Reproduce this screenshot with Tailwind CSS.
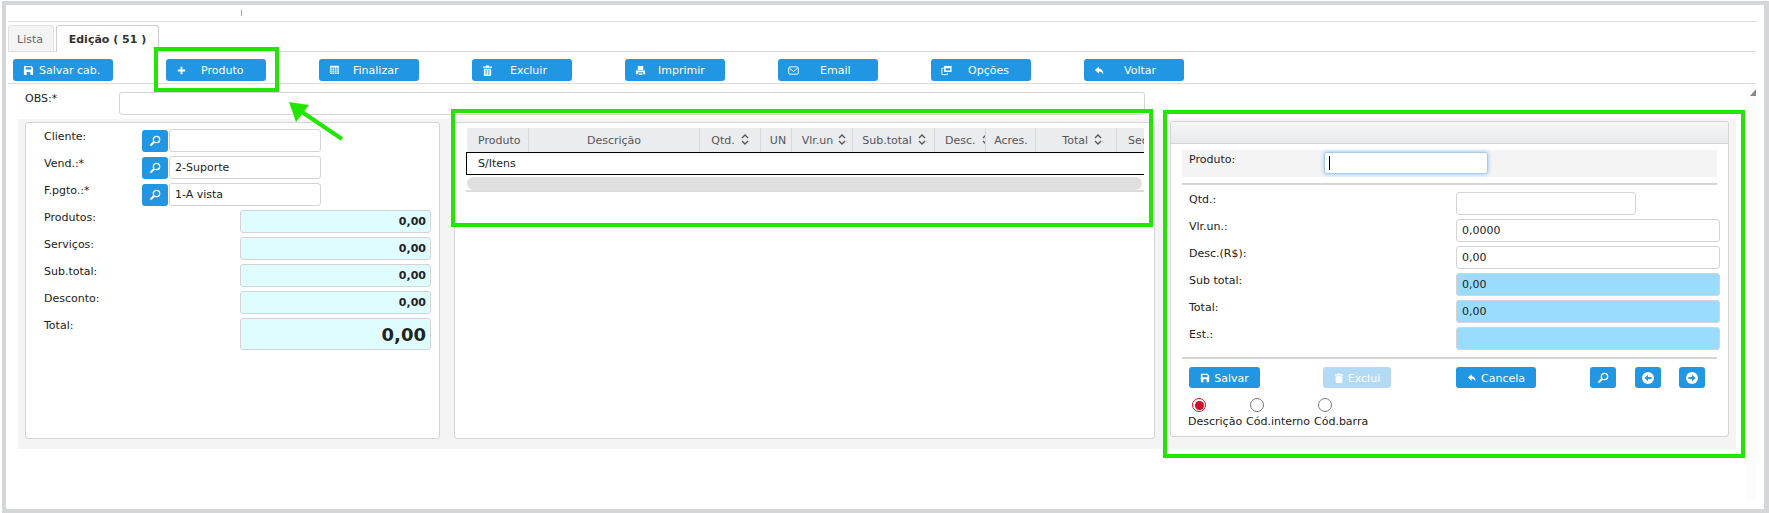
<!DOCTYPE html>
<html lang="pt-BR">
<head>
  <meta charset="UTF-8">
  <title>Edição</title>
  <script src="https://cdn.jsdelivr.net/npm/@tailwindcss/browser@4"></script>
</head>
<body class="bg-white text-[#222] text-[11px] leading-[12px] font-['DejaVu_Sans',sans-serif]">
<div class="relative w-[1769px] h-[513px] overflow-hidden bg-white">
  <!-- moldura -->
  <div class="ml-[2px] mt-[1px] h-[512px] border-[#d4d6d8] border-l-[4px] border-t-[4px] border-r-[5px] border-b-[4px]">
    <div class="ml-[2px] w-[1748px]">
      <!-- topo -->
      <div class="h-[17px] border-b border-[#dcdcdc] pt-[5px] pl-[233px]">
        <div class="w-px h-[6px] bg-[#aaa]"></div>
      </div>
      <!-- abas -->
      <div class="h-[30px] pt-[3px] border-b border-[#dcdcdc] flex gap-[2px]">
        <div class="w-[46px] h-[26px] bg-[#f4f4f4] border border-b-0 border-[#e2e2e2] rounded-t-[3px] flex items-center justify-center pt-[2px] pr-[2px] text-[#666]">Lista</div>
        <div class="w-[103px] h-[27px] bg-white border border-b-0 border-[#cfcfcf] rounded-t-[3px] flex items-center justify-center pt-[2px] font-bold text-[#333]">Edição ( 51 )</div>
      </div>
      <!-- barra de botoes -->
      <div class="h-[32px] border-b border-[#dcdcdc] pt-[7px] pl-[5px] flex gap-[53px]">
        <button class="w-[100px] h-[22px] rounded-[3px] bg-[#2196e3] text-white flex items-center pl-[10px]">
          <svg class="w-[11px] h-[11px]" viewBox="0 0 12 12"><path fill="#fff" fill-rule="evenodd" d="M2 1h7l2 2v7a1 1 0 0 1-1 1H2a1 1 0 0 1-1-1V2a1 1 0 0 1 1-1zM3 2.5V5h6V2.5zM4 7.5V11h4V7.5z"/></svg>
          <span class="ml-[5px] mt-[2px]">Salvar cab.</span>
        </button>
        <button class="w-[100px] h-[22px] rounded-[3px] bg-[#2196e3] text-white flex items-center pl-[10px]">
          <svg class="w-[11px] h-[11px]" viewBox="0 0 12 12"><path fill="#fff" d="M5 2h2v3h3v2H7v3H5V7H2V5h3z"/></svg>
          <span class="ml-[14px] mt-[2px]">Produto</span>
        </button>
        <button class="w-[100px] h-[22px] rounded-[3px] bg-[#2196e3] text-white flex items-center pl-[10px]">
          <svg class="w-[11px] h-[11px] -mt-[2px]" viewBox="0 0 12 12"><rect x="1" y="2" width="10" height="9" rx="1" fill="#fff"/><path stroke="#2196e3" stroke-width=".7" d="M1 4.5h10M1 6.7h10M1 8.9h10M3.5 4v7M6 4v7M8.5 4v7"/></svg>
          <span class="ml-[13px] mt-[2px]">Finalizar</span>
        </button>
        <button class="w-[100px] h-[22px] rounded-[3px] bg-[#2196e3] text-white flex items-center pl-[10px]">
          <svg class="w-[11px] h-[11px]" viewBox="0 0 12 12"><path fill="#fff" d="M4.5 0.5h3l.5 1h3v1.5H1V1.500h3zM2 4h8v7a1 1 0 0 1-1 1H3a1 1 0 0 1-1-1z"/><path stroke="#2196e3" d="M4.500 5.500v5M7.500 5.500v5"/></svg>
          <span class="ml-[17px] mt-[2px]">Excluir</span>
        </button>
        <button class="w-[100px] h-[22px] rounded-[3px] bg-[#2196e3] text-white flex items-center pl-[10px]">
          <svg class="w-[11px] h-[11px]" viewBox="0 0 12 12"><path fill="#fff" d="M3 1h6v4.500H3zM1 6h10v4H9V8H3v2H1zM4 9h4v2H4z"/></svg>
          <span class="ml-[12px] mt-[2px]">Imprimir</span>
        </button>
        <button class="w-[100px] h-[22px] rounded-[3px] bg-[#2196e3] text-white flex items-center pl-[10px]">
          <svg class="w-[11px] h-[11px]" viewBox="0 0 12 12" fill="none" stroke="#fff"><rect x=".7" y="2" width="10.600" height="8" rx="1.500"/><path d="M1.500 3.500 6 7l4.500-3.500"/></svg>
          <span class="ml-[21px] mt-[2px]">Email</span>
        </button>
        <button class="w-[100px] h-[22px] rounded-[3px] bg-[#2196e3] text-white flex items-center pl-[10px]">
          <svg class="w-[11px] h-[11px]" viewBox="0 0 12 12" fill="none" stroke="#fff"><path d="M3 3.500H1v7h6V9"/><rect x="4" y="1.500" width="7" height="5.500" fill="#fff"/><rect x="5" y="3.500" width="5" height="2.500" fill="#2196e3" stroke="none"/></svg>
          <span class="ml-[16px] mt-[2px]">Opções</span>
        </button>
        <button class="w-[100px] h-[22px] rounded-[3px] bg-[#2196e3] text-white flex items-center pl-[10px]">
          <svg class="w-[11px] h-[11px]" viewBox="0 0 12 12"><path fill="#fff" d="M5.500 1.500 1 5.500l4.500 4V7c2.500 0 3.700 1 4.500 3.500C10.500 6.500 8.500 4 5.500 4z"/></svg>
          <span class="ml-[19px] mt-[2px]">Voltar</span>
        </button>
      </div>
      <!-- OBS -->
      <div class="mt-[8px] flex items-start">
        <label class="w-[111px] pl-[17px] pt-[1px]">OBS:*</label>
        <input class="w-[1026px] h-[23px] border border-[#d4d4d4] rounded-[3px] bg-white">
      </div>
      <!-- painel -->
      <div class="mt-[4px] ml-[10px] w-[1718px] h-[330px] bg-[#f4f4f4] flex items-start">
        <!-- coluna esquerda -->
        <div class="ml-[7px] mt-[3px] w-[415px] h-[317px] bg-white border border-[#d4d4d4] rounded-[3px] pt-[6px] pl-[18px]">
          <div class="h-[27px] flex items-start">
            <label class="w-[98px] pt-[2px]">Cliente:</label>
            <button class="mt-px w-[26px] h-[22px] rounded-[3px] bg-[#2196e3] flex items-center justify-center">
              <svg class="w-[12px] h-[12px]" viewBox="0 0 12 12" fill="none" stroke="#fff"><circle cx="7.500" cy="4.500" r="3.200" stroke-width="1.300"/><path d="M5 7 1.500 10.500" stroke-width="2"/></svg>
            </button>
            <input class="ml-px w-[152px] h-[23px] border border-[#d4d4d4] rounded-[3px] px-[5px]">
          </div>
          <div class="h-[27px] flex items-start">
            <label class="w-[98px] pt-[2px]">Vend.:*</label>
            <button class="mt-px w-[26px] h-[22px] rounded-[3px] bg-[#2196e3] flex items-center justify-center">
              <svg class="w-[12px] h-[12px]" viewBox="0 0 12 12" fill="none" stroke="#fff"><circle cx="7.500" cy="4.500" r="3.200" stroke-width="1.300"/><path d="M5 7 1.500 10.500" stroke-width="2"/></svg>
            </button>
            <input class="ml-px w-[152px] h-[23px] border border-[#d4d4d4] rounded-[3px] px-[5px]" value="2-Suporte">
          </div>
          <div class="h-[27px] flex items-start">
            <label class="w-[98px] pt-[2px]">F.pgto.:*</label>
            <button class="mt-px w-[26px] h-[22px] rounded-[3px] bg-[#2196e3] flex items-center justify-center">
              <svg class="w-[12px] h-[12px]" viewBox="0 0 12 12" fill="none" stroke="#fff"><circle cx="7.500" cy="4.500" r="3.200" stroke-width="1.300"/><path d="M5 7 1.500 10.500" stroke-width="2"/></svg>
            </button>
            <input class="ml-px w-[152px] h-[23px] border border-[#d4d4d4] rounded-[3px] px-[5px]" value="1-A vista">
          </div>
          <div class="h-[27px] flex items-start">
            <label class="w-[196px] pt-[2px]">Produtos:</label>
            <input class="w-[191px] h-[23px] border border-[#d4d4d4] rounded-[3px] px-[4px] bg-[#dffdff] text-right font-bold" value="0,00">
          </div>
          <div class="h-[27px] flex items-start">
            <label class="w-[196px] pt-[2px]">Serviços:</label>
            <input class="w-[191px] h-[23px] border border-[#d4d4d4] rounded-[3px] px-[4px] bg-[#dffdff] text-right font-bold" value="0,00">
          </div>
          <div class="h-[27px] flex items-start">
            <label class="w-[196px] pt-[2px]">Sub.total:</label>
            <input class="w-[191px] h-[23px] border border-[#d4d4d4] rounded-[3px] px-[4px] bg-[#dffdff] text-right font-bold" value="0,00">
          </div>
          <div class="h-[27px] flex items-start">
            <label class="w-[196px] pt-[2px]">Desconto:</label>
            <input class="w-[191px] h-[23px] border border-[#d4d4d4] rounded-[3px] px-[4px] bg-[#dffdff] text-right font-bold" value="0,00">
          </div>
          <div class="flex items-start">
            <label class="w-[196px] pt-[2px]">Total:</label>
            <input class="w-[191px] h-[32px] border border-[#d4d4d4] rounded-[3px] px-[4px] bg-[#dffdff] text-right font-bold text-[18px]" value="0,00">
          </div>
        </div>
        <!-- coluna central -->
        <div class="ml-[14px] mt-[3px] w-[701px] h-[317px] bg-white border border-[#d4d4d4] rounded-[3px] pt-[5px] pl-[11px]">
          <div class="w-[678px] overflow-hidden border-b-2 border-[#dcdcdc] h-[64px]">
            <table class="table-fixed w-[710px] border-collapse">
              <thead>
                <tr class="h-[24px] bg-[#ebecf0] text-[#555]">
                  <th class="w-[62px] font-normal pt-[2px] pl-[4px] border-r border-[#d8d8d8] border-b border-b-black">Produto</th>
                  <th class="w-[171px] font-normal pt-[2px] border-r border-[#d8d8d8] border-b border-b-black">Descrição</th>
                  <th class="w-[61px] font-normal pt-[2px] border-r border-[#d8d8d8] border-b border-b-black">
                    <span class="flex items-center justify-center gap-[6px]">Qtd.
                      <svg class="w-[8px] h-[11px] -mt-[2px]" viewBox="0 0 8 11" fill="none" stroke="#555" stroke-width="1.300"><path d="M1 4l3-3 3 3M1 7l3 3 3-3"/></svg>
                    </span>
                  </th>
                  <th class="w-[31px] font-normal pt-[2px] pl-[4px] border-r border-[#d8d8d8] border-b border-b-black">UN</th>
                  <th class="w-[61px] font-normal pt-[2px] pl-[4px] border-r border-[#d8d8d8] border-b border-b-black">
                    <span class="flex items-center justify-center gap-[5px]">Vlr.un
                      <svg class="w-[8px] h-[11px] -mt-[2px]" viewBox="0 0 8 11" fill="none" stroke="#555" stroke-width="1.300"><path d="M1 4l3-3 3 3M1 7l3 3 3-3"/></svg>
                    </span>
                  </th>
                  <th class="w-[82px] font-normal pt-[2px] pl-px border-r border-[#d8d8d8] border-b border-b-black">
                    <span class="flex items-center justify-center gap-[6px]">Sub.total
                      <svg class="w-[8px] h-[11px] -mt-[2px]" viewBox="0 0 8 11" fill="none" stroke="#555" stroke-width="1.300"><path d="M1 4l3-3 3 3M1 7l3 3 3-3"/></svg>
                    </span>
                  </th>
                  <th class="w-[51px] font-normal pt-[2px] border-r border-[#d8d8d8] border-b border-b-black overflow-hidden">
                    <span class="flex items-center justify-start pl-[10px] gap-[6px]">Desc.
                      <svg class="w-[8px] h-[11px] -mt-[2px] shrink-0" viewBox="0 0 8 11" fill="none" stroke="#555" stroke-width="1.300"><path d="M1 4l3-3 3 3M1 7l3 3 3-3"/></svg>
                    </span>
                  </th>
                  <th class="w-[50px] font-normal pt-[2px] pl-px border-r border-[#d8d8d8] border-b border-b-black">Acres.</th>
                  <th class="w-[81px] font-normal pt-[2px] border-r border-[#d8d8d8] border-b border-b-black">
                    <span class="flex items-center justify-end pr-[14px] gap-[6px]">Total
                      <svg class="w-[8px] h-[11px] -mt-[2px]" viewBox="0 0 8 11" fill="none" stroke="#555" stroke-width="1.300"><path d="M1 4l3-3 3 3M1 7l3 3 3-3"/></svg>
                    </span>
                  </th>
                  <th class="w-[60px] font-normal pt-[2px] border-b border-b-black text-left pl-[11px]">Seq.</th>
                </tr>
              </thead>
              <tbody>
                <tr class="h-[22px]">
                  <td colspan="10" class="border-l border-b border-black pl-[11px] pt-[2px]">S/Itens</td>
                </tr>
              </tbody>
            </table>
            <div class="mt-[2px] ml-px w-[675px] h-[13px] rounded-full bg-[#e0e0e0]"></div>
          </div>
        </div>
        <!-- coluna direita -->
        <div class="ml-[15px] mt-[2px] w-[559px] h-[316px] bg-white border border-[#d4d4d4] rounded-[3px]">
          <div class="h-[22px] border-b border-[#d4d4d4] bg-linear-to-b from-[#f6f6f7] to-[#e9eaec] rounded-t-[3px]"></div>
          <div class="mt-[6px] ml-[11px] w-[535px] h-[27px] bg-[#f4f4f4] pl-[7px] pt-[2px] flex items-start">
            <label class="w-[135px] pt-[2px]">Produto:</label>
            <div class="w-[164px] h-[22px] bg-white border border-[#a8cdea] rounded-[3px] shadow-[0_0_4px_#8fc2ea] flex items-center pl-[4px]">
              <div class="w-px h-[14px] bg-black"></div>
            </div>
          </div>
          <div class="mt-[6px] ml-[11px] w-[535px] h-[2px] bg-[#d4d4d4]"></div>
          <div class="mt-[7px] ml-[18px]">
            <div class="h-[27px] flex items-start">
              <label class="w-[267px] pt-[2px]">Qtd.:</label>
              <input class="w-[180px] h-[23px] border border-[#d4d4d4] rounded-[3px] px-[5px]">
            </div>
            <div class="h-[27px] flex items-start">
              <label class="w-[267px] pt-[2px]">Vlr.un.:</label>
              <input class="w-[264px] h-[23px] border border-[#d4d4d4] rounded-[3px] px-[5px]" value="0,0000">
            </div>
            <div class="h-[27px] flex items-start">
              <label class="w-[267px] pt-[2px]">Desc.(R$):</label>
              <input class="w-[264px] h-[23px] border border-[#d4d4d4] rounded-[3px] px-[5px]" value="0,00">
            </div>
            <div class="h-[27px] flex items-start">
              <label class="w-[267px] pt-[2px]">Sub total:</label>
              <input class="w-[264px] h-[23px] border border-[#d4d4d4] rounded-[3px] px-[5px] bg-[#99dcfd]" value="0,00">
            </div>
            <div class="h-[27px] flex items-start">
              <label class="w-[267px] pt-[2px]">Total:</label>
              <input class="w-[264px] h-[23px] border border-[#d4d4d4] rounded-[3px] px-[5px] bg-[#99dcfd]" value="0,00">
            </div>
            <div class="h-[23px] flex items-start">
              <label class="w-[267px] pt-[2px]">Est.:</label>
              <input class="w-[264px] h-[23px] border border-[#d4d4d4] rounded-[3px] px-[5px] bg-[#99dcfd]">
            </div>
          </div>
          <div class="mt-[7px] ml-[11px] w-[535px] h-[2px] bg-[#d4d4d4]"></div>
          <div class="mt-[8px] ml-[18px] flex">
            <button class="w-[71px] h-[21px] rounded-[3px] bg-[#2196e3] text-white flex items-center justify-center gap-[4px]">
              <svg class="w-[10px] h-[10px]" viewBox="0 0 12 12"><path fill="#fff" fill-rule="evenodd" d="M2 1h7l2 2v7a1 1 0 0 1-1 1H2a1 1 0 0 1-1-1V2a1 1 0 0 1 1-1zM3 2.500V5h6V2.500zM4 7.500V11h4V7.500z"/></svg>
              <span class="mt-[2px]">Salvar</span>
            </button>
            <button class="ml-[63px] w-[68px] h-[21px] rounded-[3px] bg-[#2196e3]/35 text-white flex items-center justify-center gap-[4px]">
              <svg class="w-[10px] h-[10px]" viewBox="0 0 12 12"><path fill="#fff" d="M4.500.500h3l.5 1h3V3H1V1.500h3zM2 4h8v7a1 1 0 0 1-1 1H3a1 1 0 0 1-1-1z"/></svg>
              <span class="mt-[2px]">Exclui</span>
            </button>
            <button class="ml-[65px] w-[80px] h-[21px] rounded-[3px] bg-[#2196e3] text-white flex items-center justify-center gap-[4px]">
              <svg class="w-[10px] h-[10px]" viewBox="0 0 12 12"><path fill="#fff" d="M5.500 1.500 1 5.500l4.500 4V7c2.500 0 3.700 1 4.500 3.500C10.500 6.500 8.500 4 5.500 4z"/></svg>
              <span class="mt-[2px]">Cancela</span>
            </button>
            <button class="ml-[54px] w-[26px] h-[21px] rounded-[3px] bg-[#2196e3] flex items-center justify-center">
              <svg class="w-[12px] h-[12px]" viewBox="0 0 12 12" fill="none" stroke="#fff"><circle cx="7.500" cy="4.500" r="3.200" stroke-width="1.300"/><path d="M5 7 1.500 10.500" stroke-width="2"/></svg>
            </button>
            <button class="ml-[19px] w-[26px] h-[21px] rounded-[3px] bg-[#2196e3] flex items-center justify-center">
              <svg class="w-[12px] h-[12px]" viewBox="0 0 12 12"><circle cx="6" cy="6" r="6" fill="#fff"/><path fill="#2196e3" d="M2.500 6 6 2.800V5h3.500v2H6v2.200z"/></svg>
            </button>
            <button class="ml-[18px] w-[26px] h-[21px] rounded-[3px] bg-[#2196e3] flex items-center justify-center">
              <svg class="w-[12px] h-[12px]" viewBox="0 0 12 12"><circle cx="6" cy="6" r="6" fill="#fff"/><path fill="#2196e3" d="M9.500 6 6 2.800V5H2.500v2H6v2.200z"/></svg>
            </button>
          </div>
          <div class="mt-[10px] ml-[17px] flex">
            <div class="w-[58px]">
              <div class="ml-[4px] w-[14px] h-[14px] rounded-full border border-[#d0112b] flex items-center justify-center">
                <div class="w-[9px] h-[9px] rounded-full bg-[#d0112b]"></div>
              </div>
              <div class="mt-[4px] whitespace-nowrap">Descrição</div>
            </div>
            <div class="w-[68px]">
              <div class="ml-[4px] w-[14px] h-[14px] rounded-full border border-[#777]"></div>
              <div class="mt-[4px] whitespace-nowrap">Cód.interno</div>
            </div>
            <div>
              <div class="ml-[4px] w-[14px] h-[14px] rounded-full border border-[#777]"></div>
              <div class="mt-[4px] whitespace-nowrap">Cód.barra</div>
            </div>
          </div>
        </div>
      </div>
    </div>
  </div>
  <!-- trilha de rolagem -->
  <div class="absolute left-[1747px] top-[85px] w-[9px] h-[415px] bg-[#fcfcfc]">
    <svg class="absolute left-[3px] top-[4px] w-[6px] h-[7px]" viewBox="0 0 6 7"><path fill="#888" d="M6 0v7H0z"/></svg>
  </div>
  <!-- marcacoes em verde -->
  <div class="absolute left-[154px] top-[47px] w-[125px] h-[45px] border-[4px] border-[#22e600]"></div>
  <div class="absolute left-[451px] top-[109px] w-[702px] h-[118px] border-[4px] border-[#22e600]"></div>
  <div class="absolute left-[1163px] top-[110px] w-[582px] h-[348px] border-[4px] border-[#22e600]"></div>
  <svg class="absolute left-[285px] top-[98px] w-[62px] h-[46px]" viewBox="0 0 62 46">
    <path d="M57 41 14 12" stroke="#22e600" stroke-width="4"/>
    <path fill="#22e600" d="M4 4 24 7 11 24z"/>
  </svg>
</div>
</body>
</html>
